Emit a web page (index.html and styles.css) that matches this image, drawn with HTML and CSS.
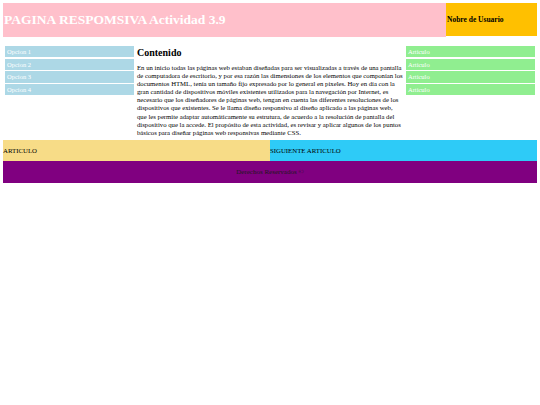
FILE: index.html
```html
<!DOCTYPE html>
<html lang="es">
<head>
<meta charset="utf-8">
<title>Pagina Responsiva</title>
<link rel="stylesheet" href="styles.css">
</head>
<body>
<header class="top">
  <div class="title">PAGINA RESPOMSIVA Actividad 3.9</div>
  <div class="user">Nobre de Usuario</div>
</header>
<div class="main">
  <nav class="menu">
    <div class="opt">Opcion 1</div>
    <div class="opt">Opcion 2</div>
    <div class="opt">Opcion 3</div>
    <div class="opt">Opcion 4</div>
  </nav>
  <section class="content">
    <h2 class="heading">Contenido</h2>
    <p class="text">En un inicio todas las páginas web estaban diseñadas para ser visualizadas a través de una pantalla de computadora de escritorio, y por esa razón las dimensiones de los elementos que componían los documentos HTML, tenía un tamaño fijo expresado por lo general en pixeles. Hoy en día con la gran cantidad de dispositivos móviles existentes utilizados para la navegación por Internet, es necesario que los diseñadores de páginas web, tengan en cuenta las diferentes resoluciones de los dispositivos que existentes. Se le llama diseño responsivo al diseño aplicado a las páginas web, que les permite adaptar automáticamente su estrutura, de acuerdo a la resolución de pantalla del dispositivo que la accede. El propósito de esta actividad, es revisar y aplicar algunos de los puntos básicos para diseñar páginas web responsivas mediante CSS.</p>
  </section>
  <aside class="side">
    <div class="art">Articulo</div>
    <div class="art">Articulo</div>
    <div class="art">Articulo</div>
    <div class="art">Articulo</div>
  </aside>
</div>
<div class="articles">
  <div class="a1">ARTICULO</div>
  <div class="a2">SIGUIENTE ARTICULO</div>
</div>
<footer class="foot">Derechos Reservados ©</footer>
</body>
</html>
```
FILE: styles.css
```css
html, body {
  background: #ffffff;
}
body {
  margin: 3px;
  font-family: "Liberation Serif", "Times New Roman", serif;
  color: #000;
}
.top {
  display: flex;
  height: 34px;
}
.title {
  flex: 1;
  background: #ffc0cb;
  color: #ffffff;
  font-weight: bold;
  font-size: 13.5px;
  display: flex;
  align-items: center;
  padding-left: 1px;
}
.user {
  width: 90px;
  height: 33px;
  background: #ffc000;
  font-weight: bold;
  font-size: 7.5px;
  display: flex;
  align-items: center;
  padding-left: 1px;
}
.main {
  display: flex;
  margin-top: 9px;
  height: 94px;
}
.menu, .side {
  width: 129px;
  padding: 0 2px;
  display: flex;
  flex-direction: column;
  gap: 1.2px;
}
.opt, .art {
  height: 11.4px;
  font-size: 6.5px;
  color: #ffffff;
  display: flex;
  align-items: center;
  padding-left: 2px;
}
.opt { background: #add8e6; }
.art { background: #90ee90; }
.content {
  flex: 1;
  padding: 0 1px;
}
.heading {
  margin: 0;
  font-size: 10px;
  line-height: 13px;
}
.text {
  margin: 5px 0 0 0;
  font-size: 6.72px;
  line-height: 8.1px;
}
.articles {
  display: flex;
  height: 21px;
  font-size: 6.8px;
}
.a1, .a2 {
  flex: 1;
  display: flex;
  align-items: center;
}
.a1 { background: #f7dc87; }
.a2 { background: #2ecbf7; }
.foot {
  background: #800080;
  height: 22px;
  font-size: 7px;
  color: #1a1a1a;
  display: flex;
  align-items: center;
  justify-content: center;
}
```
